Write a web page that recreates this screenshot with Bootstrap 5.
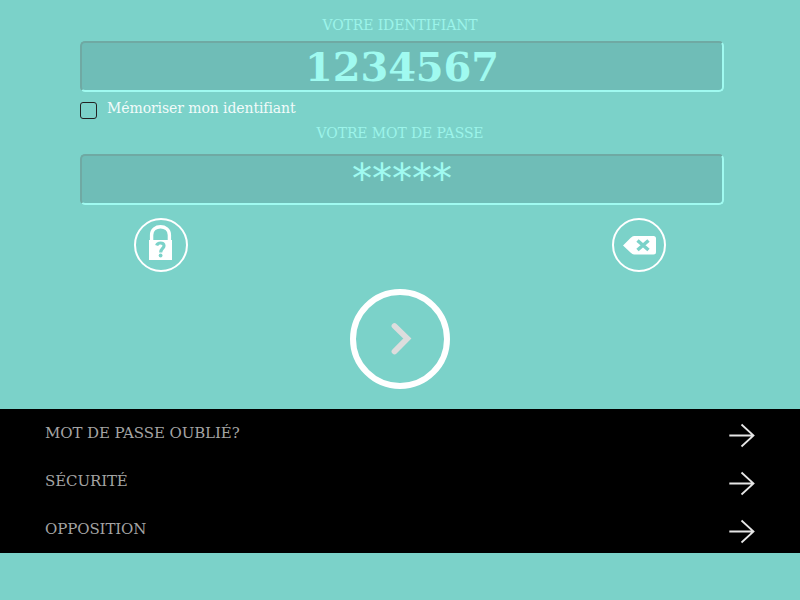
<!DOCTYPE html>
<html lang="fr">
<head>
<meta charset="utf-8">
<meta name="viewport" content="width=device-width, initial-scale=1">
<title>Connexion</title>
<link href="https://cdn.jsdelivr.net/npm/bootstrap@5.3.0/dist/css/bootstrap.min.css" rel="stylesheet">
<style>
body{background:#7bd2c9;font-family:"DejaVu Serif",serif;min-height:600px}
.login-form{padding:15px 76px 0 80px}
.field-label{font-size:14px;line-height:20px;letter-spacing:-.1px;color:#9cf4ea;margin-right:4px;text-align:center;display:block}
.entry{width:644px;height:51px;border:2px solid;border-color:#6fa9a3 #a0faf0 #a0faf0 #6fa9a3;border-radius:5px;background:#6fbdb7;color:#a0faf0;font-size:40px;line-height:47px;text-align:center}
.entry-id{margin-top:6px;letter-spacing:-.1px}
.entry-pass{margin-top:11px;font-family:"DejaVu Sans",sans-serif}
.remember{height:31px;color:#f2fbfa;font-size:14px;line-height:20px;letter-spacing:-.09px}
.remember-text{margin:6px 0 0 10px}
.tick-box{width:17px;height:17px;border:1px solid #222;border-radius:3px;margin-top:10px}
.round-btn{width:54px;height:54px;border:2px solid #fff;background:none}
.go-btn{width:100px;height:100px;border:6px solid #fff;background:none}
.tool-row{padding:13px 134px 17px}
.help-links{margin-top:20px;background:#000}
.help-links a{height:48px;padding:0 44px 0 45px;color:#a4a4a4;font-size:15px;line-height:48px;letter-spacing:-.1px}
</style>
<script src="https://cdn.jsdelivr.net/npm/bootstrap@5.3.0/dist/js/bootstrap.bundle.min.js"></script>
</head>
<body>
<main class="login-form">
  <span class="field-label">VOTRE IDENTIFIANT</span>
  <div class="entry entry-id fw-bold">1234567</div>
  <div class="remember d-flex"><span class="tick-box"></span><span class="remember-text">Mémoriser mon identifiant</span></div>
  <span class="field-label">VOTRE MOT DE PASSE</span>
  <div class="entry entry-pass">*****</div>
</main>
<div class="tool-row d-flex justify-content-between">
  <button class="round-btn rounded-circle p-0 d-flex" aria-label="Aide">
    <svg width="50" height="50" viewBox="136 220 50 50"><path d="M151.600 241V235C151.600 224 169.400 224 169.400 235V241" fill="none" stroke="#fff" stroke-width="3.400"/><path fill="#fff" d="M149 240h23v20h-23z"/><path d="M156.700 245.500C157.500 242.300 164 242 164 245.700C164 248.500 160.700 248.400 160.700 252.500" fill="none" stroke="#7bd2c9" stroke-width="3.200"/><circle cx="160.600" cy="255.500" r="1.900" fill="#7bd2c9"/></svg>
  </button>
  <button class="round-btn rounded-circle p-0 d-flex" aria-label="Effacer">
    <svg width="50" height="50" viewBox="614 220 50 50"><path fill="#fff" d="M623 245.500L630.500 238Q632.500 236 634 236H653.500Q656 236 656 238.500V252Q656 254.500 653.500 254.500H634Q632.500 254.500 630.500 252.500Z"/><path d="M637.500 240.500l11 9.500M648.500 240.500l-11 9.500" stroke="#7bd2c9" stroke-width="3.500"/></svg>
  </button>
</div>
<div class="d-flex justify-content-center">
  <button class="go-btn rounded-circle p-0 d-flex" aria-label="Valider">
    <svg width="88" height="88" viewBox="356 295 88 88"><path d="M394.500 326L407.300 338.500L394.500 351.500" fill="none" stroke="#ddd" stroke-width="5.800" stroke-linecap="round"/></svg>
  </button>
</div>
<nav class="help-links">
  <a href="#" class="d-flex justify-content-between text-decoration-none"><span>MOT DE PASSE OUBLIÉ?</span><svg width="28" height="48" viewBox="0 0 28 48"><path d="M1.300 26.500H26M13.500 15.500L25.500 26.500L13.500 37.500" fill="none" stroke="#e6e6e6" stroke-width="1.800"/></svg></a>
  <a href="#" class="d-flex justify-content-between text-decoration-none"><span>SÉCURITÉ</span><svg width="28" height="48" viewBox="0 0 28 48"><path d="M1.300 26.500H26M13.500 15.500L25.500 26.500L13.500 37.500" fill="none" stroke="#e6e6e6" stroke-width="1.800"/></svg></a>
  <a href="#" class="d-flex justify-content-between text-decoration-none"><span>OPPOSITION</span><svg width="28" height="48" viewBox="0 0 28 48"><path d="M1.300 26.500H26M13.500 15.500L25.500 26.500L13.500 37.500" fill="none" stroke="#e6e6e6" stroke-width="1.800"/></svg></a>
</nav>
</body>
</html>
